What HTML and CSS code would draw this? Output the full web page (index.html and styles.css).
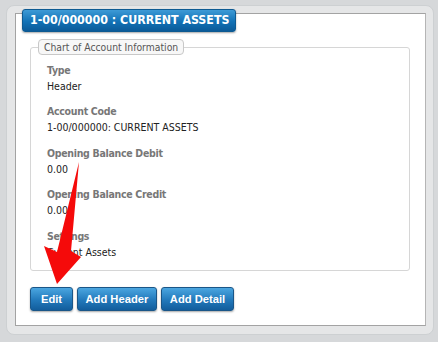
FILE: index.html
```html
<!DOCTYPE html>
<html>
<head>
    <title>Chart of Account</title>
    <link rel="stylesheet" href="styles.css">
</head>
<body>
<div class="panel">
    <div class="box">
        <h2 class="title">1-00/000000 : CURRENT ASSETS</h2>

        <fieldset class="info">
            <legend>Chart of Account Information</legend>
            <div class="row">
                <div class="label">Type</div>
                <div class="value">Header</div>
            </div>
            <div class="row">
                <div class="label">Account Code</div>
                <div class="value">1-00/000000: CURRENT ASSETS</div>
            </div>
            <div class="row">
                <div class="label">Opening Balance Debit</div>
                <div class="value">0.00</div>
            </div>
            <div class="row">
                <div class="label">Opening Balance Credit</div>
                <div class="value">0.00</div>
            </div>
            <div class="row">
                <div class="label">Settings</div>
                <div class="value">Current Assets</div>
            </div>
        </fieldset>

        <div class="actions">
            <button class="btn">Edit</button>
            <button class="btn">Add Header</button>
            <button class="btn">Add Detail</button>
        </div>

        <svg class="arrow" width="100" height="140" viewBox="0 0 100 140">
            <polygon points="64,0 56,89 66,95 42,122 29,84 42,90" fill="#f50a0a"/>
        </svg>
    </div>
</div>
</body>
</html>
```
FILE: styles.css
```css
* {
    box-sizing: border-box;
}

body {
    margin: 0;
    padding: 5px 4px 6px 6px;
    background: #d6d8da;
    font-family: "DejaVu Sans Condensed", "DejaVu Sans", sans-serif;
    font-size: 10.5px;
}

.panel {
    background: #e5e6e7;
    border: 1px solid #cdd0d2;
    border-radius: 8px;
    padding: 7px 7px 8px 8px;
}

.box {
    position: relative;
    background: #fff;
    border: 1px solid #a3a3a3;
    border-right-color: #b5b5b5;
    padding: 0 15px 14px 14px;
    height: 313px;
}

.title {
    display: inline-block;
    margin: -6px 0 0 -8px;
    padding: 3px 6px 4px 7px;
    font-size: 12.3px;
    font-weight: bold;
    color: #fff;
    background: linear-gradient(#3d9ad6, #1272b6 55%, #0b5a98);
    border: 1px solid #0d5a92;
    border-radius: 3px;
    box-shadow: 0 1px 2px rgba(0, 0, 0, 0.35);
}

.info {
    margin: 7px 0 0;
    padding: 7px 16px 10px 16px;
    border: 1px solid #d6d6d6;
    border-radius: 3px;
    height: 232px;
}

.info legend {
    margin-left: -9px;
    padding: 1px 5px;
    font-size: 10.3px;
    color: #555;
    background: #f7f7f7;
    border: 1px solid #c8c8c8;
    border-radius: 4px;
}

.row {
    margin-bottom: 9.4px;
}

.label {
    font-weight: bold;
    color: #777;
    line-height: 16px;
    letter-spacing: -0.3px;
}

.value {
    color: #222;
    line-height: 16px;
}

.actions {
    display: flex;
    gap: 3.5px;
    margin-top: 16px;
}

.btn {
    min-width: 43px;
    height: 24px;
    padding: 0 8px;
    font-family: "Liberation Sans", Arial, sans-serif;
    font-size: 11.2px;
    font-weight: bold;
    color: #fff;
    background: linear-gradient(#4ba6e0, #2279bb 55%, #125d9c);
    border: 1px solid #1a5688;
    border-radius: 3px;
    box-shadow: 0 1px 2px rgba(0, 0, 0, 0.35);
    cursor: pointer;
}

.arrow {
    position: absolute;
    left: -1px;
    top: 148px;
}
```
